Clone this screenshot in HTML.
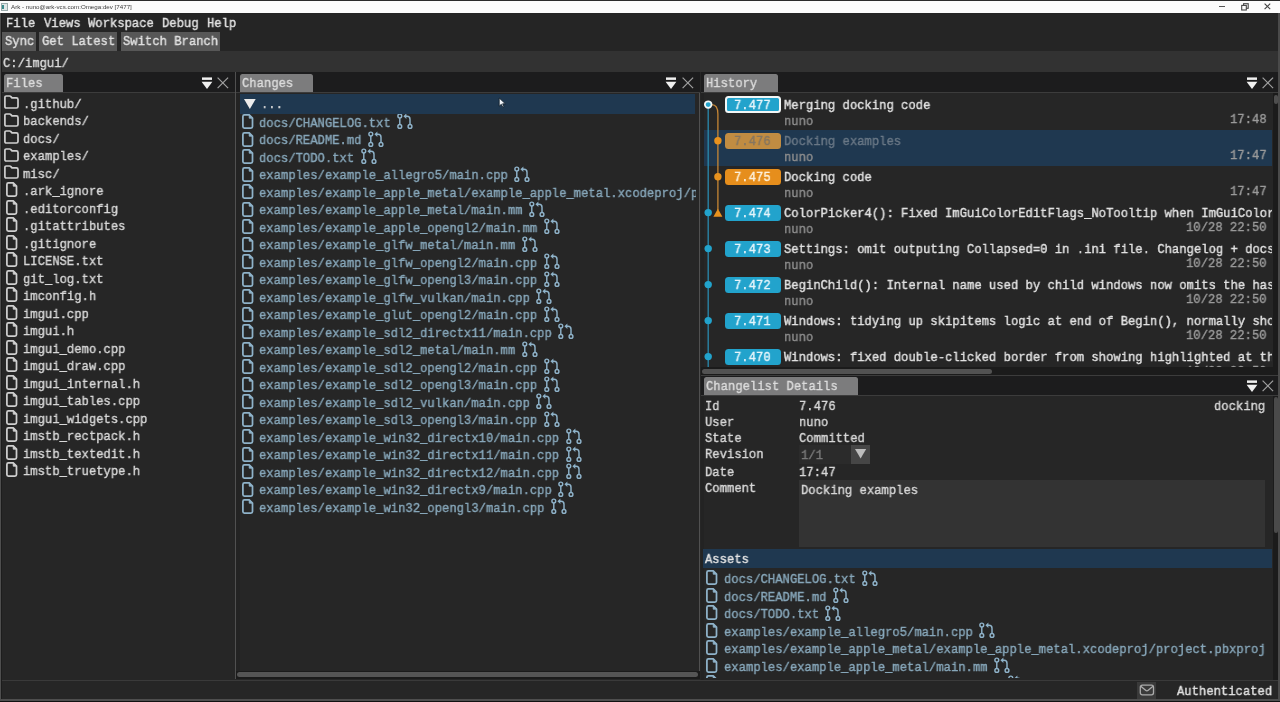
<!DOCTYPE html><html><head><meta charset="utf-8"><style>
*{margin:0;padding:0;box-sizing:border-box}
html,body{width:1280px;height:702px;overflow:hidden;background:#242424}
body{filter:blur(0.3px)}
body{position:relative;font-family:"Liberation Mono",monospace;font-size:13.5px;color:#dcdcdc}
.a{position:absolute}
.t{position:absolute;white-space:pre;line-height:14px;transform:scaleX(0.9035);transform-origin:0 0;will-change:transform;-webkit-text-stroke:0.4px currentColor}
.ic{position:absolute;overflow:visible}
.clip{position:absolute;overflow:hidden}
</style></head><body>
<div class="a" style="left:0;top:0;width:1280px;height:1px;background:#2a2a2a"></div>
<div class="a" style="left:0;top:1px;width:1280px;height:12px;background:#fbfbfb"></div>
<div class="a" style="left:1px;top:3px;width:7px;height:8px;background:#dfe6e6;border:1px solid #9aa"></div>
<div class="a" style="left:2px;top:5px;width:2px;height:4px;background:#3a8a8a"></div>
<div style="position:absolute;left:11.3px;top:2.5px;font-family:'Liberation Sans',sans-serif;font-size:6.2px;line-height:8px;color:#3a3a3a;white-space:pre;will-change:transform">Ark - nuno@ark-vcs.com:Omega:dev [7477]</div>
<div class="a" style="left:1219.3px;top:5.6px;width:5.5px;height:1.2px;background:#555"></div>
<svg class="ic" style="left:1241px;top:2.6px" width="8" height="8" viewBox="0 0 8 8"><rect x="2.6" y="0.7" width="4.6" height="4.6" fill="none" stroke="#444" stroke-width="1.1"/><rect x="0.7" y="2.4" width="4.6" height="4.6" fill="#fbfbfb" stroke="#444" stroke-width="1.1"/></svg>
<svg class="ic" style="left:1264.2px;top:2.8px" width="7" height="7" viewBox="0 0 7 7"><path d="M0.6 0.6 L6.2 6.2 M6.2 0.6 L0.6 6.2" stroke="#444" stroke-width="1.1"/></svg>
<div class="a" style="left:0;top:13px;width:1280px;height:689px;background:#1d1d1d"></div>
<div class="a" style="left:2px;top:13px;width:1276px;height:38px;background:#252525"></div>
<div class="t " style="left:6.2px;top:16.70px;color:#e2e2e2;">File</div>
<div class="t " style="left:43.7px;top:16.70px;color:#e2e2e2;">Views</div>
<div class="t " style="left:88px;top:16.70px;color:#e2e2e2;">Workspace</div>
<div class="t " style="left:162px;top:16.70px;color:#e2e2e2;">Debug</div>
<div class="t " style="left:207px;top:16.70px;color:#e2e2e2;">Help</div>
<div class="a" style="left:2.3px;top:31.5px;width:33.3px;height:19px;background:#575757"></div>
<div class="t " style="left:4.5px;top:35.30px;color:#e0e0e0;">Sync</div>
<div class="a" style="left:39.4px;top:31.5px;width:77.9px;height:19px;background:#575757"></div>
<div class="t " style="left:41.6px;top:35.30px;color:#e0e0e0;">Get Latest</div>
<div class="a" style="left:121px;top:31.5px;width:99.4px;height:19px;background:#575757"></div>
<div class="t " style="left:123.2px;top:35.30px;color:#e0e0e0;">Switch Branch</div>
<div class="a" style="left:2px;top:51px;width:1276px;height:21px;background:#323232"></div>
<div class="t " style="left:2.7px;top:56.70px;color:#dcdcdc;">C:/imgui/</div>
<div class="a" style="left:2px;top:72px;width:1276px;height:608px;background:#262626"></div>
<div class="a" style="left:236px;top:93px;width:4px;height:578px;background:#232323"></div>
<div class="a" style="left:701px;top:93px;width:3px;height:274px;background:#232323"></div>
<div class="a" style="left:701px;top:396px;width:3px;height:284px;background:#232323"></div>
<div class="a" style="left:235px;top:72px;width:1px;height:607px;background:#505050"></div>
<div class="a" style="left:699.3px;top:72px;width:1px;height:607px;background:#505050"></div>
<div class="a" style="left:2px;top:72px;width:233px;height:20px;background:#1c1c1d"></div>
<div class="a" style="left:2px;top:92px;width:233px;height:1px;background:#3c3c3c"></div>
<div class="a" style="left:3.75px;top:74px;width:59.4px;height:18px;background:#7c7c7d;border-radius:2.5px 2.5px 0 0"></div>
<div class="t " style="left:5.85px;top:77.10px;color:#dcdcdc;">Files</div>
<svg class="ic" style="left:200.8px;top:76px" width="12" height="14" viewBox="0 0 12 14"><rect x="1" y="1.1" width="10" height="3" fill="#111"/><rect x="1" y="1.4" width="10" height="2.5" fill="#f0f0f0"/><path d="M0.6 5.8 H11.4 L6 13 Z" fill="#f0f0f0"/></svg>
<svg class="ic" style="left:217px;top:77.4px" width="12" height="12" viewBox="0 0 12 12"><path d="M0.6 0.6 L11.1 11.1 M11.1 0.6 L0.6 11.1" stroke="#a0a0a0" stroke-width="1.2"/></svg>
<svg class="ic" style="left:3px;top:94.10px" width="17" height="16" viewBox="0 0 17 16"><path d="M3.3 2 H6.6 Q7.4 2 7.9 2.6 L9 3.9 H13.4 Q15 3.9 15 5.5 V12.4 Q15 14 13.4 14 H3.3 Q1.9 14 1.9 12.4 V3.6 Q1.9 2 3.3 2 Z" fill="none" stroke="#cfcfcf" stroke-width="1.7" stroke-linejoin="round"/></svg>
<div class="t " style="left:23.4px;top:97.60px;color:#d8d8d8;">.github/</div>
<svg class="ic" style="left:3px;top:111.60px" width="17" height="16" viewBox="0 0 17 16"><path d="M3.3 2 H6.6 Q7.4 2 7.9 2.6 L9 3.9 H13.4 Q15 3.9 15 5.5 V12.4 Q15 14 13.4 14 H3.3 Q1.9 14 1.9 12.4 V3.6 Q1.9 2 3.3 2 Z" fill="none" stroke="#cfcfcf" stroke-width="1.7" stroke-linejoin="round"/></svg>
<div class="t " style="left:23.4px;top:115.10px;color:#d8d8d8;">backends/</div>
<svg class="ic" style="left:3px;top:129.10px" width="17" height="16" viewBox="0 0 17 16"><path d="M3.3 2 H6.6 Q7.4 2 7.9 2.6 L9 3.9 H13.4 Q15 3.9 15 5.5 V12.4 Q15 14 13.4 14 H3.3 Q1.9 14 1.9 12.4 V3.6 Q1.9 2 3.3 2 Z" fill="none" stroke="#cfcfcf" stroke-width="1.7" stroke-linejoin="round"/></svg>
<div class="t " style="left:23.4px;top:132.60px;color:#d8d8d8;">docs/</div>
<svg class="ic" style="left:3px;top:146.60px" width="17" height="16" viewBox="0 0 17 16"><path d="M3.3 2 H6.6 Q7.4 2 7.9 2.6 L9 3.9 H13.4 Q15 3.9 15 5.5 V12.4 Q15 14 13.4 14 H3.3 Q1.9 14 1.9 12.4 V3.6 Q1.9 2 3.3 2 Z" fill="none" stroke="#cfcfcf" stroke-width="1.7" stroke-linejoin="round"/></svg>
<div class="t " style="left:23.4px;top:150.10px;color:#d8d8d8;">examples/</div>
<svg class="ic" style="left:3px;top:164.10px" width="17" height="16" viewBox="0 0 17 16"><path d="M3.3 2 H6.6 Q7.4 2 7.9 2.6 L9 3.9 H13.4 Q15 3.9 15 5.5 V12.4 Q15 14 13.4 14 H3.3 Q1.9 14 1.9 12.4 V3.6 Q1.9 2 3.3 2 Z" fill="none" stroke="#cfcfcf" stroke-width="1.7" stroke-linejoin="round"/></svg>
<div class="t " style="left:23.4px;top:167.60px;color:#d8d8d8;">misc/</div>
<svg class="ic" style="left:4.7px;top:181.30px" width="14" height="17" viewBox="0 0 14 17"><path d="M3.4 1.9 H8.2 L11.5 5.2 V13.5 Q11.5 15.1 9.9 15.1 H3.4 Q1.9 15.1 1.9 13.5 V3.5 Q1.9 1.9 3.4 1.9 Z" fill="none" stroke="#cfcfcf" stroke-width="1.75" stroke-linejoin="round"/><path d="M8.2 1.9 V5.2 H11.5 Z" fill="#cfcfcf" stroke="#cfcfcf" stroke-width="0.8" stroke-linejoin="round"/></svg>
<div class="t " style="left:23.4px;top:185.10px;color:#d8d8d8;">.ark_ignore</div>
<svg class="ic" style="left:4.7px;top:198.80px" width="14" height="17" viewBox="0 0 14 17"><path d="M3.4 1.9 H8.2 L11.5 5.2 V13.5 Q11.5 15.1 9.9 15.1 H3.4 Q1.9 15.1 1.9 13.5 V3.5 Q1.9 1.9 3.4 1.9 Z" fill="none" stroke="#cfcfcf" stroke-width="1.75" stroke-linejoin="round"/><path d="M8.2 1.9 V5.2 H11.5 Z" fill="#cfcfcf" stroke="#cfcfcf" stroke-width="0.8" stroke-linejoin="round"/></svg>
<div class="t " style="left:23.4px;top:202.60px;color:#d8d8d8;">.editorconfig</div>
<svg class="ic" style="left:4.7px;top:216.30px" width="14" height="17" viewBox="0 0 14 17"><path d="M3.4 1.9 H8.2 L11.5 5.2 V13.5 Q11.5 15.1 9.9 15.1 H3.4 Q1.9 15.1 1.9 13.5 V3.5 Q1.9 1.9 3.4 1.9 Z" fill="none" stroke="#cfcfcf" stroke-width="1.75" stroke-linejoin="round"/><path d="M8.2 1.9 V5.2 H11.5 Z" fill="#cfcfcf" stroke="#cfcfcf" stroke-width="0.8" stroke-linejoin="round"/></svg>
<div class="t " style="left:23.4px;top:220.10px;color:#d8d8d8;">.gitattributes</div>
<svg class="ic" style="left:4.7px;top:233.80px" width="14" height="17" viewBox="0 0 14 17"><path d="M3.4 1.9 H8.2 L11.5 5.2 V13.5 Q11.5 15.1 9.9 15.1 H3.4 Q1.9 15.1 1.9 13.5 V3.5 Q1.9 1.9 3.4 1.9 Z" fill="none" stroke="#cfcfcf" stroke-width="1.75" stroke-linejoin="round"/><path d="M8.2 1.9 V5.2 H11.5 Z" fill="#cfcfcf" stroke="#cfcfcf" stroke-width="0.8" stroke-linejoin="round"/></svg>
<div class="t " style="left:23.4px;top:237.60px;color:#d8d8d8;">.gitignore</div>
<svg class="ic" style="left:4.7px;top:251.30px" width="14" height="17" viewBox="0 0 14 17"><path d="M3.4 1.9 H8.2 L11.5 5.2 V13.5 Q11.5 15.1 9.9 15.1 H3.4 Q1.9 15.1 1.9 13.5 V3.5 Q1.9 1.9 3.4 1.9 Z" fill="none" stroke="#cfcfcf" stroke-width="1.75" stroke-linejoin="round"/><path d="M8.2 1.9 V5.2 H11.5 Z" fill="#cfcfcf" stroke="#cfcfcf" stroke-width="0.8" stroke-linejoin="round"/></svg>
<div class="t " style="left:23.4px;top:255.10px;color:#d8d8d8;">LICENSE.txt</div>
<svg class="ic" style="left:4.7px;top:268.80px" width="14" height="17" viewBox="0 0 14 17"><path d="M3.4 1.9 H8.2 L11.5 5.2 V13.5 Q11.5 15.1 9.9 15.1 H3.4 Q1.9 15.1 1.9 13.5 V3.5 Q1.9 1.9 3.4 1.9 Z" fill="none" stroke="#cfcfcf" stroke-width="1.75" stroke-linejoin="round"/><path d="M8.2 1.9 V5.2 H11.5 Z" fill="#cfcfcf" stroke="#cfcfcf" stroke-width="0.8" stroke-linejoin="round"/></svg>
<div class="t " style="left:23.4px;top:272.60px;color:#d8d8d8;">git_log.txt</div>
<svg class="ic" style="left:4.7px;top:286.30px" width="14" height="17" viewBox="0 0 14 17"><path d="M3.4 1.9 H8.2 L11.5 5.2 V13.5 Q11.5 15.1 9.9 15.1 H3.4 Q1.9 15.1 1.9 13.5 V3.5 Q1.9 1.9 3.4 1.9 Z" fill="none" stroke="#cfcfcf" stroke-width="1.75" stroke-linejoin="round"/><path d="M8.2 1.9 V5.2 H11.5 Z" fill="#cfcfcf" stroke="#cfcfcf" stroke-width="0.8" stroke-linejoin="round"/></svg>
<div class="t " style="left:23.4px;top:290.10px;color:#d8d8d8;">imconfig.h</div>
<svg class="ic" style="left:4.7px;top:303.80px" width="14" height="17" viewBox="0 0 14 17"><path d="M3.4 1.9 H8.2 L11.5 5.2 V13.5 Q11.5 15.1 9.9 15.1 H3.4 Q1.9 15.1 1.9 13.5 V3.5 Q1.9 1.9 3.4 1.9 Z" fill="none" stroke="#cfcfcf" stroke-width="1.75" stroke-linejoin="round"/><path d="M8.2 1.9 V5.2 H11.5 Z" fill="#cfcfcf" stroke="#cfcfcf" stroke-width="0.8" stroke-linejoin="round"/></svg>
<div class="t " style="left:23.4px;top:307.60px;color:#d8d8d8;">imgui.cpp</div>
<svg class="ic" style="left:4.7px;top:321.30px" width="14" height="17" viewBox="0 0 14 17"><path d="M3.4 1.9 H8.2 L11.5 5.2 V13.5 Q11.5 15.1 9.9 15.1 H3.4 Q1.9 15.1 1.9 13.5 V3.5 Q1.9 1.9 3.4 1.9 Z" fill="none" stroke="#cfcfcf" stroke-width="1.75" stroke-linejoin="round"/><path d="M8.2 1.9 V5.2 H11.5 Z" fill="#cfcfcf" stroke="#cfcfcf" stroke-width="0.8" stroke-linejoin="round"/></svg>
<div class="t " style="left:23.4px;top:325.10px;color:#d8d8d8;">imgui.h</div>
<svg class="ic" style="left:4.7px;top:338.80px" width="14" height="17" viewBox="0 0 14 17"><path d="M3.4 1.9 H8.2 L11.5 5.2 V13.5 Q11.5 15.1 9.9 15.1 H3.4 Q1.9 15.1 1.9 13.5 V3.5 Q1.9 1.9 3.4 1.9 Z" fill="none" stroke="#cfcfcf" stroke-width="1.75" stroke-linejoin="round"/><path d="M8.2 1.9 V5.2 H11.5 Z" fill="#cfcfcf" stroke="#cfcfcf" stroke-width="0.8" stroke-linejoin="round"/></svg>
<div class="t " style="left:23.4px;top:342.60px;color:#d8d8d8;">imgui_demo.cpp</div>
<svg class="ic" style="left:4.7px;top:356.30px" width="14" height="17" viewBox="0 0 14 17"><path d="M3.4 1.9 H8.2 L11.5 5.2 V13.5 Q11.5 15.1 9.9 15.1 H3.4 Q1.9 15.1 1.9 13.5 V3.5 Q1.9 1.9 3.4 1.9 Z" fill="none" stroke="#cfcfcf" stroke-width="1.75" stroke-linejoin="round"/><path d="M8.2 1.9 V5.2 H11.5 Z" fill="#cfcfcf" stroke="#cfcfcf" stroke-width="0.8" stroke-linejoin="round"/></svg>
<div class="t " style="left:23.4px;top:360.10px;color:#d8d8d8;">imgui_draw.cpp</div>
<svg class="ic" style="left:4.7px;top:373.80px" width="14" height="17" viewBox="0 0 14 17"><path d="M3.4 1.9 H8.2 L11.5 5.2 V13.5 Q11.5 15.1 9.9 15.1 H3.4 Q1.9 15.1 1.9 13.5 V3.5 Q1.9 1.9 3.4 1.9 Z" fill="none" stroke="#cfcfcf" stroke-width="1.75" stroke-linejoin="round"/><path d="M8.2 1.9 V5.2 H11.5 Z" fill="#cfcfcf" stroke="#cfcfcf" stroke-width="0.8" stroke-linejoin="round"/></svg>
<div class="t " style="left:23.4px;top:377.60px;color:#d8d8d8;">imgui_internal.h</div>
<svg class="ic" style="left:4.7px;top:391.30px" width="14" height="17" viewBox="0 0 14 17"><path d="M3.4 1.9 H8.2 L11.5 5.2 V13.5 Q11.5 15.1 9.9 15.1 H3.4 Q1.9 15.1 1.9 13.5 V3.5 Q1.9 1.9 3.4 1.9 Z" fill="none" stroke="#cfcfcf" stroke-width="1.75" stroke-linejoin="round"/><path d="M8.2 1.9 V5.2 H11.5 Z" fill="#cfcfcf" stroke="#cfcfcf" stroke-width="0.8" stroke-linejoin="round"/></svg>
<div class="t " style="left:23.4px;top:395.10px;color:#d8d8d8;">imgui_tables.cpp</div>
<svg class="ic" style="left:4.7px;top:408.80px" width="14" height="17" viewBox="0 0 14 17"><path d="M3.4 1.9 H8.2 L11.5 5.2 V13.5 Q11.5 15.1 9.9 15.1 H3.4 Q1.9 15.1 1.9 13.5 V3.5 Q1.9 1.9 3.4 1.9 Z" fill="none" stroke="#cfcfcf" stroke-width="1.75" stroke-linejoin="round"/><path d="M8.2 1.9 V5.2 H11.5 Z" fill="#cfcfcf" stroke="#cfcfcf" stroke-width="0.8" stroke-linejoin="round"/></svg>
<div class="t " style="left:23.4px;top:412.60px;color:#d8d8d8;">imgui_widgets.cpp</div>
<svg class="ic" style="left:4.7px;top:426.30px" width="14" height="17" viewBox="0 0 14 17"><path d="M3.4 1.9 H8.2 L11.5 5.2 V13.5 Q11.5 15.1 9.9 15.1 H3.4 Q1.9 15.1 1.9 13.5 V3.5 Q1.9 1.9 3.4 1.9 Z" fill="none" stroke="#cfcfcf" stroke-width="1.75" stroke-linejoin="round"/><path d="M8.2 1.9 V5.2 H11.5 Z" fill="#cfcfcf" stroke="#cfcfcf" stroke-width="0.8" stroke-linejoin="round"/></svg>
<div class="t " style="left:23.4px;top:430.10px;color:#d8d8d8;">imstb_rectpack.h</div>
<svg class="ic" style="left:4.7px;top:443.80px" width="14" height="17" viewBox="0 0 14 17"><path d="M3.4 1.9 H8.2 L11.5 5.2 V13.5 Q11.5 15.1 9.9 15.1 H3.4 Q1.9 15.1 1.9 13.5 V3.5 Q1.9 1.9 3.4 1.9 Z" fill="none" stroke="#cfcfcf" stroke-width="1.75" stroke-linejoin="round"/><path d="M8.2 1.9 V5.2 H11.5 Z" fill="#cfcfcf" stroke="#cfcfcf" stroke-width="0.8" stroke-linejoin="round"/></svg>
<div class="t " style="left:23.4px;top:447.60px;color:#d8d8d8;">imstb_textedit.h</div>
<svg class="ic" style="left:4.7px;top:461.30px" width="14" height="17" viewBox="0 0 14 17"><path d="M3.4 1.9 H8.2 L11.5 5.2 V13.5 Q11.5 15.1 9.9 15.1 H3.4 Q1.9 15.1 1.9 13.5 V3.5 Q1.9 1.9 3.4 1.9 Z" fill="none" stroke="#cfcfcf" stroke-width="1.75" stroke-linejoin="round"/><path d="M8.2 1.9 V5.2 H11.5 Z" fill="#cfcfcf" stroke="#cfcfcf" stroke-width="0.8" stroke-linejoin="round"/></svg>
<div class="t " style="left:23.4px;top:465.10px;color:#d8d8d8;">imstb_truetype.h</div>
<div class="a" style="left:236px;top:72px;width:464px;height:20px;background:#1c1c1d"></div>
<div class="a" style="left:236px;top:92px;width:464px;height:1px;background:#3c3c3c"></div>
<div class="a" style="left:240px;top:74px;width:73.2px;height:18px;background:#7c7c7d;border-radius:2.5px 2.5px 0 0"></div>
<div class="t " style="left:242.1px;top:77.10px;color:#dcdcdc;">Changes</div>
<svg class="ic" style="left:665px;top:76px" width="12" height="14" viewBox="0 0 12 14"><rect x="1" y="1.1" width="10" height="3" fill="#111"/><rect x="1" y="1.4" width="10" height="2.5" fill="#f0f0f0"/><path d="M0.6 5.8 H11.4 L6 13 Z" fill="#f0f0f0"/></svg>
<svg class="ic" style="left:681.7px;top:77.4px" width="12" height="12" viewBox="0 0 12 12"><path d="M0.6 0.6 L11.1 11.1 M11.1 0.6 L0.6 11.1" stroke="#a0a0a0" stroke-width="1.2"/></svg>
<div class="a" style="left:240px;top:93.7px;width:455px;height:19.9px;background:#1f3850"></div>
<svg class="ic" style="left:244.3px;top:98.8px" width="12" height="10" viewBox="0 0 12 10"><path d="M0 0 H11.7 L5.85 10 Z" fill="#ececec"/></svg>
<div class="t " style="left:260.8px;top:98.20px;color:#d8d8d8;">...</div>
<div class="clip" style="left:236px;top:113.6px;width:460px;height:557px">
<svg class="ic" style="left:4.699999999999989px;top:-0.50px" width="14" height="17" viewBox="0 0 14 17"><path d="M3.4 1.9 H8.2 L11.5 5.2 V13.5 Q11.5 15.1 9.9 15.1 H3.4 Q1.9 15.1 1.9 13.5 V3.5 Q1.9 1.9 3.4 1.9 Z" fill="none" stroke="#8fb3ca" stroke-width="1.75" stroke-linejoin="round"/><path d="M8.2 1.9 V5.2 H11.5 Z" fill="#8fb3ca" stroke="#8fb3ca" stroke-width="0.8" stroke-linejoin="round"/></svg>
<div class="t " style="left:23.30000000000001px;top:3.30px;color:#87a7ba;">docs/CHANGELOG.txt</div>
<svg class="ic" style="left:161.324px;top:-0.20px" width="15" height="16" viewBox="0 0 15 16"><g fill="none" stroke="#8fb3ca" stroke-width="1.45"><circle cx="2.8" cy="3" r="1.9"/><circle cx="2.8" cy="13.4" r="1.9"/><line x1="2.8" y1="4.9" x2="2.8" y2="11.5"/><circle cx="13" cy="13.4" r="1.9"/><path d="M13 11.5 V6.2 Q13 3.2 10 3.2 H8.4"/></g><path d="M6.4 3.2 L9.4 0.4 V6 Z" fill="#8fb3ca"/></svg>
<svg class="ic" style="left:4.699999999999989px;top:17.00px" width="14" height="17" viewBox="0 0 14 17"><path d="M3.4 1.9 H8.2 L11.5 5.2 V13.5 Q11.5 15.1 9.9 15.1 H3.4 Q1.9 15.1 1.9 13.5 V3.5 Q1.9 1.9 3.4 1.9 Z" fill="none" stroke="#8fb3ca" stroke-width="1.75" stroke-linejoin="round"/><path d="M8.2 1.9 V5.2 H11.5 Z" fill="#8fb3ca" stroke="#8fb3ca" stroke-width="0.8" stroke-linejoin="round"/></svg>
<div class="t " style="left:23.30000000000001px;top:20.80px;color:#87a7ba;">docs/README.md</div>
<svg class="ic" style="left:132.05200000000002px;top:17.30px" width="15" height="16" viewBox="0 0 15 16"><g fill="none" stroke="#8fb3ca" stroke-width="1.45"><circle cx="2.8" cy="3" r="1.9"/><circle cx="2.8" cy="13.4" r="1.9"/><line x1="2.8" y1="4.9" x2="2.8" y2="11.5"/><circle cx="13" cy="13.4" r="1.9"/><path d="M13 11.5 V6.2 Q13 3.2 10 3.2 H8.4"/></g><path d="M6.4 3.2 L9.4 0.4 V6 Z" fill="#8fb3ca"/></svg>
<svg class="ic" style="left:4.699999999999989px;top:34.50px" width="14" height="17" viewBox="0 0 14 17"><path d="M3.4 1.9 H8.2 L11.5 5.2 V13.5 Q11.5 15.1 9.9 15.1 H3.4 Q1.9 15.1 1.9 13.5 V3.5 Q1.9 1.9 3.4 1.9 Z" fill="none" stroke="#8fb3ca" stroke-width="1.75" stroke-linejoin="round"/><path d="M8.2 1.9 V5.2 H11.5 Z" fill="#8fb3ca" stroke="#8fb3ca" stroke-width="0.8" stroke-linejoin="round"/></svg>
<div class="t " style="left:23.30000000000001px;top:38.30px;color:#87a7ba;">docs/TODO.txt</div>
<svg class="ic" style="left:124.73400000000001px;top:34.80px" width="15" height="16" viewBox="0 0 15 16"><g fill="none" stroke="#8fb3ca" stroke-width="1.45"><circle cx="2.8" cy="3" r="1.9"/><circle cx="2.8" cy="13.4" r="1.9"/><line x1="2.8" y1="4.9" x2="2.8" y2="11.5"/><circle cx="13" cy="13.4" r="1.9"/><path d="M13 11.5 V6.2 Q13 3.2 10 3.2 H8.4"/></g><path d="M6.4 3.2 L9.4 0.4 V6 Z" fill="#8fb3ca"/></svg>
<svg class="ic" style="left:4.699999999999989px;top:52.00px" width="14" height="17" viewBox="0 0 14 17"><path d="M3.4 1.9 H8.2 L11.5 5.2 V13.5 Q11.5 15.1 9.9 15.1 H3.4 Q1.9 15.1 1.9 13.5 V3.5 Q1.9 1.9 3.4 1.9 Z" fill="none" stroke="#8fb3ca" stroke-width="1.75" stroke-linejoin="round"/><path d="M8.2 1.9 V5.2 H11.5 Z" fill="#8fb3ca" stroke="#8fb3ca" stroke-width="0.8" stroke-linejoin="round"/></svg>
<div class="t " style="left:23.30000000000001px;top:55.80px;color:#87a7ba;">examples/example_allegro5/main.cpp</div>
<svg class="ic" style="left:278.412px;top:52.30px" width="15" height="16" viewBox="0 0 15 16"><g fill="none" stroke="#8fb3ca" stroke-width="1.45"><circle cx="2.8" cy="3" r="1.9"/><circle cx="2.8" cy="13.4" r="1.9"/><line x1="2.8" y1="4.9" x2="2.8" y2="11.5"/><circle cx="13" cy="13.4" r="1.9"/><path d="M13 11.5 V6.2 Q13 3.2 10 3.2 H8.4"/></g><path d="M6.4 3.2 L9.4 0.4 V6 Z" fill="#8fb3ca"/></svg>
<svg class="ic" style="left:4.699999999999989px;top:69.50px" width="14" height="17" viewBox="0 0 14 17"><path d="M3.4 1.9 H8.2 L11.5 5.2 V13.5 Q11.5 15.1 9.9 15.1 H3.4 Q1.9 15.1 1.9 13.5 V3.5 Q1.9 1.9 3.4 1.9 Z" fill="none" stroke="#8fb3ca" stroke-width="1.75" stroke-linejoin="round"/><path d="M8.2 1.9 V5.2 H11.5 Z" fill="#8fb3ca" stroke="#8fb3ca" stroke-width="0.8" stroke-linejoin="round"/></svg>
<div class="t " style="left:23.30000000000001px;top:73.30px;color:#87a7ba;">examples/example_apple_metal/example_apple_metal.xcodeproj/project.pbxproj</div>
<svg class="ic" style="left:4.699999999999989px;top:87.00px" width="14" height="17" viewBox="0 0 14 17"><path d="M3.4 1.9 H8.2 L11.5 5.2 V13.5 Q11.5 15.1 9.9 15.1 H3.4 Q1.9 15.1 1.9 13.5 V3.5 Q1.9 1.9 3.4 1.9 Z" fill="none" stroke="#8fb3ca" stroke-width="1.75" stroke-linejoin="round"/><path d="M8.2 1.9 V5.2 H11.5 Z" fill="#8fb3ca" stroke="#8fb3ca" stroke-width="0.8" stroke-linejoin="round"/></svg>
<div class="t " style="left:23.30000000000001px;top:90.80px;color:#87a7ba;">examples/example_apple_metal/main.mm</div>
<svg class="ic" style="left:293.048px;top:87.30px" width="15" height="16" viewBox="0 0 15 16"><g fill="none" stroke="#8fb3ca" stroke-width="1.45"><circle cx="2.8" cy="3" r="1.9"/><circle cx="2.8" cy="13.4" r="1.9"/><line x1="2.8" y1="4.9" x2="2.8" y2="11.5"/><circle cx="13" cy="13.4" r="1.9"/><path d="M13 11.5 V6.2 Q13 3.2 10 3.2 H8.4"/></g><path d="M6.4 3.2 L9.4 0.4 V6 Z" fill="#8fb3ca"/></svg>
<svg class="ic" style="left:4.699999999999989px;top:104.50px" width="14" height="17" viewBox="0 0 14 17"><path d="M3.4 1.9 H8.2 L11.5 5.2 V13.5 Q11.5 15.1 9.9 15.1 H3.4 Q1.9 15.1 1.9 13.5 V3.5 Q1.9 1.9 3.4 1.9 Z" fill="none" stroke="#8fb3ca" stroke-width="1.75" stroke-linejoin="round"/><path d="M8.2 1.9 V5.2 H11.5 Z" fill="#8fb3ca" stroke="#8fb3ca" stroke-width="0.8" stroke-linejoin="round"/></svg>
<div class="t " style="left:23.30000000000001px;top:108.30px;color:#87a7ba;">examples/example_apple_opengl2/main.mm</div>
<svg class="ic" style="left:307.684px;top:104.80px" width="15" height="16" viewBox="0 0 15 16"><g fill="none" stroke="#8fb3ca" stroke-width="1.45"><circle cx="2.8" cy="3" r="1.9"/><circle cx="2.8" cy="13.4" r="1.9"/><line x1="2.8" y1="4.9" x2="2.8" y2="11.5"/><circle cx="13" cy="13.4" r="1.9"/><path d="M13 11.5 V6.2 Q13 3.2 10 3.2 H8.4"/></g><path d="M6.4 3.2 L9.4 0.4 V6 Z" fill="#8fb3ca"/></svg>
<svg class="ic" style="left:4.699999999999989px;top:122.00px" width="14" height="17" viewBox="0 0 14 17"><path d="M3.4 1.9 H8.2 L11.5 5.2 V13.5 Q11.5 15.1 9.9 15.1 H3.4 Q1.9 15.1 1.9 13.5 V3.5 Q1.9 1.9 3.4 1.9 Z" fill="none" stroke="#8fb3ca" stroke-width="1.75" stroke-linejoin="round"/><path d="M8.2 1.9 V5.2 H11.5 Z" fill="#8fb3ca" stroke="#8fb3ca" stroke-width="0.8" stroke-linejoin="round"/></svg>
<div class="t " style="left:23.30000000000001px;top:125.80px;color:#87a7ba;">examples/example_glfw_metal/main.mm</div>
<svg class="ic" style="left:285.73px;top:122.30px" width="15" height="16" viewBox="0 0 15 16"><g fill="none" stroke="#8fb3ca" stroke-width="1.45"><circle cx="2.8" cy="3" r="1.9"/><circle cx="2.8" cy="13.4" r="1.9"/><line x1="2.8" y1="4.9" x2="2.8" y2="11.5"/><circle cx="13" cy="13.4" r="1.9"/><path d="M13 11.5 V6.2 Q13 3.2 10 3.2 H8.4"/></g><path d="M6.4 3.2 L9.4 0.4 V6 Z" fill="#8fb3ca"/></svg>
<svg class="ic" style="left:4.699999999999989px;top:139.50px" width="14" height="17" viewBox="0 0 14 17"><path d="M3.4 1.9 H8.2 L11.5 5.2 V13.5 Q11.5 15.1 9.9 15.1 H3.4 Q1.9 15.1 1.9 13.5 V3.5 Q1.9 1.9 3.4 1.9 Z" fill="none" stroke="#8fb3ca" stroke-width="1.75" stroke-linejoin="round"/><path d="M8.2 1.9 V5.2 H11.5 Z" fill="#8fb3ca" stroke="#8fb3ca" stroke-width="0.8" stroke-linejoin="round"/></svg>
<div class="t " style="left:23.30000000000001px;top:143.30px;color:#87a7ba;">examples/example_glfw_opengl2/main.cpp</div>
<svg class="ic" style="left:307.684px;top:139.80px" width="15" height="16" viewBox="0 0 15 16"><g fill="none" stroke="#8fb3ca" stroke-width="1.45"><circle cx="2.8" cy="3" r="1.9"/><circle cx="2.8" cy="13.4" r="1.9"/><line x1="2.8" y1="4.9" x2="2.8" y2="11.5"/><circle cx="13" cy="13.4" r="1.9"/><path d="M13 11.5 V6.2 Q13 3.2 10 3.2 H8.4"/></g><path d="M6.4 3.2 L9.4 0.4 V6 Z" fill="#8fb3ca"/></svg>
<svg class="ic" style="left:4.699999999999989px;top:157.00px" width="14" height="17" viewBox="0 0 14 17"><path d="M3.4 1.9 H8.2 L11.5 5.2 V13.5 Q11.5 15.1 9.9 15.1 H3.4 Q1.9 15.1 1.9 13.5 V3.5 Q1.9 1.9 3.4 1.9 Z" fill="none" stroke="#8fb3ca" stroke-width="1.75" stroke-linejoin="round"/><path d="M8.2 1.9 V5.2 H11.5 Z" fill="#8fb3ca" stroke="#8fb3ca" stroke-width="0.8" stroke-linejoin="round"/></svg>
<div class="t " style="left:23.30000000000001px;top:160.80px;color:#87a7ba;">examples/example_glfw_opengl3/main.cpp</div>
<svg class="ic" style="left:307.684px;top:157.30px" width="15" height="16" viewBox="0 0 15 16"><g fill="none" stroke="#8fb3ca" stroke-width="1.45"><circle cx="2.8" cy="3" r="1.9"/><circle cx="2.8" cy="13.4" r="1.9"/><line x1="2.8" y1="4.9" x2="2.8" y2="11.5"/><circle cx="13" cy="13.4" r="1.9"/><path d="M13 11.5 V6.2 Q13 3.2 10 3.2 H8.4"/></g><path d="M6.4 3.2 L9.4 0.4 V6 Z" fill="#8fb3ca"/></svg>
<svg class="ic" style="left:4.699999999999989px;top:174.50px" width="14" height="17" viewBox="0 0 14 17"><path d="M3.4 1.9 H8.2 L11.5 5.2 V13.5 Q11.5 15.1 9.9 15.1 H3.4 Q1.9 15.1 1.9 13.5 V3.5 Q1.9 1.9 3.4 1.9 Z" fill="none" stroke="#8fb3ca" stroke-width="1.75" stroke-linejoin="round"/><path d="M8.2 1.9 V5.2 H11.5 Z" fill="#8fb3ca" stroke="#8fb3ca" stroke-width="0.8" stroke-linejoin="round"/></svg>
<div class="t " style="left:23.30000000000001px;top:178.30px;color:#87a7ba;">examples/example_glfw_vulkan/main.cpp</div>
<svg class="ic" style="left:300.366px;top:174.80px" width="15" height="16" viewBox="0 0 15 16"><g fill="none" stroke="#8fb3ca" stroke-width="1.45"><circle cx="2.8" cy="3" r="1.9"/><circle cx="2.8" cy="13.4" r="1.9"/><line x1="2.8" y1="4.9" x2="2.8" y2="11.5"/><circle cx="13" cy="13.4" r="1.9"/><path d="M13 11.5 V6.2 Q13 3.2 10 3.2 H8.4"/></g><path d="M6.4 3.2 L9.4 0.4 V6 Z" fill="#8fb3ca"/></svg>
<svg class="ic" style="left:4.699999999999989px;top:192.00px" width="14" height="17" viewBox="0 0 14 17"><path d="M3.4 1.9 H8.2 L11.5 5.2 V13.5 Q11.5 15.1 9.9 15.1 H3.4 Q1.9 15.1 1.9 13.5 V3.5 Q1.9 1.9 3.4 1.9 Z" fill="none" stroke="#8fb3ca" stroke-width="1.75" stroke-linejoin="round"/><path d="M8.2 1.9 V5.2 H11.5 Z" fill="#8fb3ca" stroke="#8fb3ca" stroke-width="0.8" stroke-linejoin="round"/></svg>
<div class="t " style="left:23.30000000000001px;top:195.80px;color:#87a7ba;">examples/example_glut_opengl2/main.cpp</div>
<svg class="ic" style="left:307.684px;top:192.30px" width="15" height="16" viewBox="0 0 15 16"><g fill="none" stroke="#8fb3ca" stroke-width="1.45"><circle cx="2.8" cy="3" r="1.9"/><circle cx="2.8" cy="13.4" r="1.9"/><line x1="2.8" y1="4.9" x2="2.8" y2="11.5"/><circle cx="13" cy="13.4" r="1.9"/><path d="M13 11.5 V6.2 Q13 3.2 10 3.2 H8.4"/></g><path d="M6.4 3.2 L9.4 0.4 V6 Z" fill="#8fb3ca"/></svg>
<svg class="ic" style="left:4.699999999999989px;top:209.50px" width="14" height="17" viewBox="0 0 14 17"><path d="M3.4 1.9 H8.2 L11.5 5.2 V13.5 Q11.5 15.1 9.9 15.1 H3.4 Q1.9 15.1 1.9 13.5 V3.5 Q1.9 1.9 3.4 1.9 Z" fill="none" stroke="#8fb3ca" stroke-width="1.75" stroke-linejoin="round"/><path d="M8.2 1.9 V5.2 H11.5 Z" fill="#8fb3ca" stroke="#8fb3ca" stroke-width="0.8" stroke-linejoin="round"/></svg>
<div class="t " style="left:23.30000000000001px;top:213.30px;color:#87a7ba;">examples/example_sdl2_directx11/main.cpp</div>
<svg class="ic" style="left:322.32px;top:209.80px" width="15" height="16" viewBox="0 0 15 16"><g fill="none" stroke="#8fb3ca" stroke-width="1.45"><circle cx="2.8" cy="3" r="1.9"/><circle cx="2.8" cy="13.4" r="1.9"/><line x1="2.8" y1="4.9" x2="2.8" y2="11.5"/><circle cx="13" cy="13.4" r="1.9"/><path d="M13 11.5 V6.2 Q13 3.2 10 3.2 H8.4"/></g><path d="M6.4 3.2 L9.4 0.4 V6 Z" fill="#8fb3ca"/></svg>
<svg class="ic" style="left:4.699999999999989px;top:227.00px" width="14" height="17" viewBox="0 0 14 17"><path d="M3.4 1.9 H8.2 L11.5 5.2 V13.5 Q11.5 15.1 9.9 15.1 H3.4 Q1.9 15.1 1.9 13.5 V3.5 Q1.9 1.9 3.4 1.9 Z" fill="none" stroke="#8fb3ca" stroke-width="1.75" stroke-linejoin="round"/><path d="M8.2 1.9 V5.2 H11.5 Z" fill="#8fb3ca" stroke="#8fb3ca" stroke-width="0.8" stroke-linejoin="round"/></svg>
<div class="t " style="left:23.30000000000001px;top:230.80px;color:#87a7ba;">examples/example_sdl2_metal/main.mm</div>
<svg class="ic" style="left:285.73px;top:227.30px" width="15" height="16" viewBox="0 0 15 16"><g fill="none" stroke="#8fb3ca" stroke-width="1.45"><circle cx="2.8" cy="3" r="1.9"/><circle cx="2.8" cy="13.4" r="1.9"/><line x1="2.8" y1="4.9" x2="2.8" y2="11.5"/><circle cx="13" cy="13.4" r="1.9"/><path d="M13 11.5 V6.2 Q13 3.2 10 3.2 H8.4"/></g><path d="M6.4 3.2 L9.4 0.4 V6 Z" fill="#8fb3ca"/></svg>
<svg class="ic" style="left:4.699999999999989px;top:244.50px" width="14" height="17" viewBox="0 0 14 17"><path d="M3.4 1.9 H8.2 L11.5 5.2 V13.5 Q11.5 15.1 9.9 15.1 H3.4 Q1.9 15.1 1.9 13.5 V3.5 Q1.9 1.9 3.4 1.9 Z" fill="none" stroke="#8fb3ca" stroke-width="1.75" stroke-linejoin="round"/><path d="M8.2 1.9 V5.2 H11.5 Z" fill="#8fb3ca" stroke="#8fb3ca" stroke-width="0.8" stroke-linejoin="round"/></svg>
<div class="t " style="left:23.30000000000001px;top:248.30px;color:#87a7ba;">examples/example_sdl2_opengl2/main.cpp</div>
<svg class="ic" style="left:307.684px;top:244.80px" width="15" height="16" viewBox="0 0 15 16"><g fill="none" stroke="#8fb3ca" stroke-width="1.45"><circle cx="2.8" cy="3" r="1.9"/><circle cx="2.8" cy="13.4" r="1.9"/><line x1="2.8" y1="4.9" x2="2.8" y2="11.5"/><circle cx="13" cy="13.4" r="1.9"/><path d="M13 11.5 V6.2 Q13 3.2 10 3.2 H8.4"/></g><path d="M6.4 3.2 L9.4 0.4 V6 Z" fill="#8fb3ca"/></svg>
<svg class="ic" style="left:4.699999999999989px;top:262.00px" width="14" height="17" viewBox="0 0 14 17"><path d="M3.4 1.9 H8.2 L11.5 5.2 V13.5 Q11.5 15.1 9.9 15.1 H3.4 Q1.9 15.1 1.9 13.5 V3.5 Q1.9 1.9 3.4 1.9 Z" fill="none" stroke="#8fb3ca" stroke-width="1.75" stroke-linejoin="round"/><path d="M8.2 1.9 V5.2 H11.5 Z" fill="#8fb3ca" stroke="#8fb3ca" stroke-width="0.8" stroke-linejoin="round"/></svg>
<div class="t " style="left:23.30000000000001px;top:265.80px;color:#87a7ba;">examples/example_sdl2_opengl3/main.cpp</div>
<svg class="ic" style="left:307.684px;top:262.30px" width="15" height="16" viewBox="0 0 15 16"><g fill="none" stroke="#8fb3ca" stroke-width="1.45"><circle cx="2.8" cy="3" r="1.9"/><circle cx="2.8" cy="13.4" r="1.9"/><line x1="2.8" y1="4.9" x2="2.8" y2="11.5"/><circle cx="13" cy="13.4" r="1.9"/><path d="M13 11.5 V6.2 Q13 3.2 10 3.2 H8.4"/></g><path d="M6.4 3.2 L9.4 0.4 V6 Z" fill="#8fb3ca"/></svg>
<svg class="ic" style="left:4.699999999999989px;top:279.50px" width="14" height="17" viewBox="0 0 14 17"><path d="M3.4 1.9 H8.2 L11.5 5.2 V13.5 Q11.5 15.1 9.9 15.1 H3.4 Q1.9 15.1 1.9 13.5 V3.5 Q1.9 1.9 3.4 1.9 Z" fill="none" stroke="#8fb3ca" stroke-width="1.75" stroke-linejoin="round"/><path d="M8.2 1.9 V5.2 H11.5 Z" fill="#8fb3ca" stroke="#8fb3ca" stroke-width="0.8" stroke-linejoin="round"/></svg>
<div class="t " style="left:23.30000000000001px;top:283.30px;color:#87a7ba;">examples/example_sdl2_vulkan/main.cpp</div>
<svg class="ic" style="left:300.366px;top:279.80px" width="15" height="16" viewBox="0 0 15 16"><g fill="none" stroke="#8fb3ca" stroke-width="1.45"><circle cx="2.8" cy="3" r="1.9"/><circle cx="2.8" cy="13.4" r="1.9"/><line x1="2.8" y1="4.9" x2="2.8" y2="11.5"/><circle cx="13" cy="13.4" r="1.9"/><path d="M13 11.5 V6.2 Q13 3.2 10 3.2 H8.4"/></g><path d="M6.4 3.2 L9.4 0.4 V6 Z" fill="#8fb3ca"/></svg>
<svg class="ic" style="left:4.699999999999989px;top:297.00px" width="14" height="17" viewBox="0 0 14 17"><path d="M3.4 1.9 H8.2 L11.5 5.2 V13.5 Q11.5 15.1 9.9 15.1 H3.4 Q1.9 15.1 1.9 13.5 V3.5 Q1.9 1.9 3.4 1.9 Z" fill="none" stroke="#8fb3ca" stroke-width="1.75" stroke-linejoin="round"/><path d="M8.2 1.9 V5.2 H11.5 Z" fill="#8fb3ca" stroke="#8fb3ca" stroke-width="0.8" stroke-linejoin="round"/></svg>
<div class="t " style="left:23.30000000000001px;top:300.80px;color:#87a7ba;">examples/example_sdl3_opengl3/main.cpp</div>
<svg class="ic" style="left:307.684px;top:297.30px" width="15" height="16" viewBox="0 0 15 16"><g fill="none" stroke="#8fb3ca" stroke-width="1.45"><circle cx="2.8" cy="3" r="1.9"/><circle cx="2.8" cy="13.4" r="1.9"/><line x1="2.8" y1="4.9" x2="2.8" y2="11.5"/><circle cx="13" cy="13.4" r="1.9"/><path d="M13 11.5 V6.2 Q13 3.2 10 3.2 H8.4"/></g><path d="M6.4 3.2 L9.4 0.4 V6 Z" fill="#8fb3ca"/></svg>
<svg class="ic" style="left:4.699999999999989px;top:314.50px" width="14" height="17" viewBox="0 0 14 17"><path d="M3.4 1.9 H8.2 L11.5 5.2 V13.5 Q11.5 15.1 9.9 15.1 H3.4 Q1.9 15.1 1.9 13.5 V3.5 Q1.9 1.9 3.4 1.9 Z" fill="none" stroke="#8fb3ca" stroke-width="1.75" stroke-linejoin="round"/><path d="M8.2 1.9 V5.2 H11.5 Z" fill="#8fb3ca" stroke="#8fb3ca" stroke-width="0.8" stroke-linejoin="round"/></svg>
<div class="t " style="left:23.30000000000001px;top:318.30px;color:#87a7ba;">examples/example_win32_directx10/main.cpp</div>
<svg class="ic" style="left:329.63800000000003px;top:314.80px" width="15" height="16" viewBox="0 0 15 16"><g fill="none" stroke="#8fb3ca" stroke-width="1.45"><circle cx="2.8" cy="3" r="1.9"/><circle cx="2.8" cy="13.4" r="1.9"/><line x1="2.8" y1="4.9" x2="2.8" y2="11.5"/><circle cx="13" cy="13.4" r="1.9"/><path d="M13 11.5 V6.2 Q13 3.2 10 3.2 H8.4"/></g><path d="M6.4 3.2 L9.4 0.4 V6 Z" fill="#8fb3ca"/></svg>
<svg class="ic" style="left:4.699999999999989px;top:332.00px" width="14" height="17" viewBox="0 0 14 17"><path d="M3.4 1.9 H8.2 L11.5 5.2 V13.5 Q11.5 15.1 9.9 15.1 H3.4 Q1.9 15.1 1.9 13.5 V3.5 Q1.9 1.9 3.4 1.9 Z" fill="none" stroke="#8fb3ca" stroke-width="1.75" stroke-linejoin="round"/><path d="M8.2 1.9 V5.2 H11.5 Z" fill="#8fb3ca" stroke="#8fb3ca" stroke-width="0.8" stroke-linejoin="round"/></svg>
<div class="t " style="left:23.30000000000001px;top:335.80px;color:#87a7ba;">examples/example_win32_directx11/main.cpp</div>
<svg class="ic" style="left:329.63800000000003px;top:332.30px" width="15" height="16" viewBox="0 0 15 16"><g fill="none" stroke="#8fb3ca" stroke-width="1.45"><circle cx="2.8" cy="3" r="1.9"/><circle cx="2.8" cy="13.4" r="1.9"/><line x1="2.8" y1="4.9" x2="2.8" y2="11.5"/><circle cx="13" cy="13.4" r="1.9"/><path d="M13 11.5 V6.2 Q13 3.2 10 3.2 H8.4"/></g><path d="M6.4 3.2 L9.4 0.4 V6 Z" fill="#8fb3ca"/></svg>
<svg class="ic" style="left:4.699999999999989px;top:349.50px" width="14" height="17" viewBox="0 0 14 17"><path d="M3.4 1.9 H8.2 L11.5 5.2 V13.5 Q11.5 15.1 9.9 15.1 H3.4 Q1.9 15.1 1.9 13.5 V3.5 Q1.9 1.9 3.4 1.9 Z" fill="none" stroke="#8fb3ca" stroke-width="1.75" stroke-linejoin="round"/><path d="M8.2 1.9 V5.2 H11.5 Z" fill="#8fb3ca" stroke="#8fb3ca" stroke-width="0.8" stroke-linejoin="round"/></svg>
<div class="t " style="left:23.30000000000001px;top:353.30px;color:#87a7ba;">examples/example_win32_directx12/main.cpp</div>
<svg class="ic" style="left:329.63800000000003px;top:349.80px" width="15" height="16" viewBox="0 0 15 16"><g fill="none" stroke="#8fb3ca" stroke-width="1.45"><circle cx="2.8" cy="3" r="1.9"/><circle cx="2.8" cy="13.4" r="1.9"/><line x1="2.8" y1="4.9" x2="2.8" y2="11.5"/><circle cx="13" cy="13.4" r="1.9"/><path d="M13 11.5 V6.2 Q13 3.2 10 3.2 H8.4"/></g><path d="M6.4 3.2 L9.4 0.4 V6 Z" fill="#8fb3ca"/></svg>
<svg class="ic" style="left:4.699999999999989px;top:367.00px" width="14" height="17" viewBox="0 0 14 17"><path d="M3.4 1.9 H8.2 L11.5 5.2 V13.5 Q11.5 15.1 9.9 15.1 H3.4 Q1.9 15.1 1.9 13.5 V3.5 Q1.9 1.9 3.4 1.9 Z" fill="none" stroke="#8fb3ca" stroke-width="1.75" stroke-linejoin="round"/><path d="M8.2 1.9 V5.2 H11.5 Z" fill="#8fb3ca" stroke="#8fb3ca" stroke-width="0.8" stroke-linejoin="round"/></svg>
<div class="t " style="left:23.30000000000001px;top:370.80px;color:#87a7ba;">examples/example_win32_directx9/main.cpp</div>
<svg class="ic" style="left:322.32px;top:367.30px" width="15" height="16" viewBox="0 0 15 16"><g fill="none" stroke="#8fb3ca" stroke-width="1.45"><circle cx="2.8" cy="3" r="1.9"/><circle cx="2.8" cy="13.4" r="1.9"/><line x1="2.8" y1="4.9" x2="2.8" y2="11.5"/><circle cx="13" cy="13.4" r="1.9"/><path d="M13 11.5 V6.2 Q13 3.2 10 3.2 H8.4"/></g><path d="M6.4 3.2 L9.4 0.4 V6 Z" fill="#8fb3ca"/></svg>
<svg class="ic" style="left:4.699999999999989px;top:384.50px" width="14" height="17" viewBox="0 0 14 17"><path d="M3.4 1.9 H8.2 L11.5 5.2 V13.5 Q11.5 15.1 9.9 15.1 H3.4 Q1.9 15.1 1.9 13.5 V3.5 Q1.9 1.9 3.4 1.9 Z" fill="none" stroke="#8fb3ca" stroke-width="1.75" stroke-linejoin="round"/><path d="M8.2 1.9 V5.2 H11.5 Z" fill="#8fb3ca" stroke="#8fb3ca" stroke-width="0.8" stroke-linejoin="round"/></svg>
<div class="t " style="left:23.30000000000001px;top:388.30px;color:#87a7ba;">examples/example_win32_opengl3/main.cpp</div>
<svg class="ic" style="left:315.002px;top:384.80px" width="15" height="16" viewBox="0 0 15 16"><g fill="none" stroke="#8fb3ca" stroke-width="1.45"><circle cx="2.8" cy="3" r="1.9"/><circle cx="2.8" cy="13.4" r="1.9"/><line x1="2.8" y1="4.9" x2="2.8" y2="11.5"/><circle cx="13" cy="13.4" r="1.9"/><path d="M13 11.5 V6.2 Q13 3.2 10 3.2 H8.4"/></g><path d="M6.4 3.2 L9.4 0.4 V6 Z" fill="#8fb3ca"/></svg>
</div>
<div class="a" style="left:236px;top:671px;width:464px;height:8px;background:#1b1b1b"></div>
<div class="a" style="left:237.4px;top:672.2px;width:460.6px;height:4.8px;background:#555;border-radius:2.5px"></div>
<svg class="ic" style="left:497.9px;top:96.9px" width="9" height="11" viewBox="0 0 9 11"><path d="M1.2 1 V9.2 L3.3 7.3 L4.8 10.2 L6 9.6 L4.6 6.8 H7.4 Z" fill="#f2f6fa" stroke="#0d1a26" stroke-width="0.8" stroke-linejoin="round"/></svg>
<div class="a" style="left:701px;top:72px;width:577px;height:20px;background:#1c1c1d"></div>
<div class="a" style="left:701px;top:92px;width:577px;height:1px;background:#3c3c3c"></div>
<div class="a" style="left:704px;top:74px;width:74.1px;height:18px;background:#7c7c7d;border-radius:2.5px 2.5px 0 0"></div>
<div class="t " style="left:706.1px;top:77.10px;color:#dcdcdc;">History</div>
<svg class="ic" style="left:1245.7px;top:76px" width="12" height="14" viewBox="0 0 12 14"><rect x="1" y="1.1" width="10" height="3" fill="#111"/><rect x="1" y="1.4" width="10" height="2.5" fill="#f0f0f0"/><path d="M0.6 5.8 H11.4 L6 13 Z" fill="#f0f0f0"/></svg>
<svg class="ic" style="left:1262px;top:77.4px" width="12" height="12" viewBox="0 0 12 12"><path d="M0.6 0.6 L11.1 11.1 M11.1 0.6 L0.6 11.1" stroke="#a0a0a0" stroke-width="1.2"/></svg>
<div class="clip" style="left:701px;top:93px;width:571px;height:274.8px">
<div class="a" style="left:3px;top:37px;width:568px;height:36.2px;background:#1f3850"></div>
<svg class="ic" style="left:0;top:0" width="40" height="274"><path d="M7.2000000000000455 15 V274" stroke="#2a86aa" stroke-width="1.35"/><path d="M10.700000000000045 11.599999999999994 Q16.899999999999977 11.599999999999994 16.899999999999977 21 V117" fill="none" stroke="#c68634" stroke-width="1.3"/><circle cx="16.899999999999977" cy="47.80000000000001" r="3.7" fill="#e8921e"/><circle cx="16.899999999999977" cy="83.80000000000001" r="3.7" fill="#e8921e"/><path d="M16.899999999999977 115.80000000000001 L21.399999999999977 123.80000000000001 H12.399999999999977 Z" fill="#e8921e"/><circle cx="7.2000000000000455" cy="11.599999999999994" r="3.35" fill="#22a3cc" stroke="#f2f6f6" stroke-width="1.75"/><circle cx="7.2000000000000455" cy="119.6" r="3.7" fill="#22a3cc"/><circle cx="7.2000000000000455" cy="155.6" r="3.7" fill="#22a3cc"/><circle cx="7.2000000000000455" cy="191.60000000000002" r="3.7" fill="#22a3cc"/><circle cx="7.2000000000000455" cy="227.60000000000002" r="3.7" fill="#22a3cc"/><circle cx="7.2000000000000455" cy="263.6" r="3.7" fill="#22a3cc"/></svg>
<div class="a" style="left:23.5px;top:3.4000000000000057px;width:56.6px;height:17px;background:#22a3cc;border-radius:3.5px;border:2.2px solid #f2f6f6"></div>
<div class="t " style="left:32.60000000000002px;top:6.05px;color:#e6f5fb;">7.477</div>
<div class="t " style="left:83px;top:5.95px;color:#e2e2e2;">Merging docking code</div>
<div class="t " style="left:83px;top:22.05px;color:#8e8e8e;">nuno</div>
<div class="a" style="left:525.01px;top:20.25px;width:40.6px;height:12px;background:#262626"></div>
<div class="t " style="left:529.01px;top:20.25px;color:#9a9a9a;">17:48</div>
<div class="a" style="left:24.299999999999955px;top:39.65px;width:55.6px;height:16.4px;background:#c08c42;border-radius:3.5px"></div>
<div class="t " style="left:32.60000000000002px;top:42.05px;color:#857660;">7.476</div>
<div class="t " style="left:83px;top:41.95px;color:#6a7886;">Docking examples</div>
<div class="t " style="left:83px;top:58.05px;color:#8e8e8e;">nuno</div>
<div class="a" style="left:525.01px;top:56.25px;width:40.6px;height:12px;background:#1f3850"></div>
<div class="t " style="left:529.01px;top:56.25px;color:#9a9a9a;">17:47</div>
<div class="a" style="left:24.299999999999955px;top:75.65px;width:55.6px;height:16.4px;background:#e68e1c;border-radius:3.5px"></div>
<div class="t " style="left:32.60000000000002px;top:78.05px;color:#fdf1dc;">7.475</div>
<div class="t " style="left:83px;top:77.95px;color:#e2e2e2;">Docking code</div>
<div class="t " style="left:83px;top:94.05px;color:#8e8e8e;">nuno</div>
<div class="a" style="left:525.01px;top:92.25px;width:40.6px;height:12px;background:#262626"></div>
<div class="t " style="left:529.01px;top:92.25px;color:#9a9a9a;">17:47</div>
<div class="a" style="left:24.299999999999955px;top:111.65px;width:55.6px;height:16.4px;background:#22a3cc;border-radius:3.5px"></div>
<div class="t " style="left:32.60000000000002px;top:114.05px;color:#e6f5fb;">7.474</div>
<div class="t " style="left:83px;top:113.95px;color:#e2e2e2;">ColorPicker4(): Fixed ImGuiColorEditFlags_NoTooltip when ImGuiColorEditFlags_NoPicker is set.</div>
<div class="t " style="left:83px;top:130.05px;color:#8e8e8e;">nuno</div>
<div class="a" style="left:481.10199999999986px;top:128.25px;width:84.5px;height:12px;background:#262626"></div>
<div class="t " style="left:485.10199999999986px;top:128.25px;color:#9a9a9a;">10/28 22:50</div>
<div class="a" style="left:24.299999999999955px;top:147.65px;width:55.6px;height:16.4px;background:#22a3cc;border-radius:3.5px"></div>
<div class="t " style="left:32.60000000000002px;top:150.05px;color:#e6f5fb;">7.473</div>
<div class="t " style="left:83px;top:149.95px;color:#e2e2e2;">Settings: omit outputing Collapsed=0 in .ini file. Changelog + docs.</div>
<div class="t " style="left:83px;top:166.05px;color:#8e8e8e;">nuno</div>
<div class="a" style="left:481.10199999999986px;top:164.25px;width:84.5px;height:12px;background:#262626"></div>
<div class="t " style="left:485.10199999999986px;top:164.25px;color:#9a9a9a;">10/28 22:50</div>
<div class="a" style="left:24.299999999999955px;top:183.65px;width:55.6px;height:16.4px;background:#22a3cc;border-radius:3.5px"></div>
<div class="t " style="left:32.60000000000002px;top:186.05px;color:#e6f5fb;">7.472</div>
<div class="t " style="left:83px;top:185.95px;color:#e2e2e2;">BeginChild(): Internal name used by child windows now omits the hash.</div>
<div class="t " style="left:83px;top:202.05px;color:#8e8e8e;">nuno</div>
<div class="a" style="left:481.10199999999986px;top:200.25px;width:84.5px;height:12px;background:#262626"></div>
<div class="t " style="left:485.10199999999986px;top:200.25px;color:#9a9a9a;">10/28 22:50</div>
<div class="a" style="left:24.299999999999955px;top:219.65px;width:55.6px;height:16.4px;background:#22a3cc;border-radius:3.5px"></div>
<div class="t " style="left:32.60000000000002px;top:222.05px;color:#e6f5fb;">7.471</div>
<div class="t " style="left:83px;top:221.95px;color:#e2e2e2;">Windows: tidying up skipitems logic at end of Begin(), normally should be a no-op.</div>
<div class="t " style="left:83px;top:238.05px;color:#8e8e8e;">nuno</div>
<div class="a" style="left:481.10199999999986px;top:236.25px;width:84.5px;height:12px;background:#262626"></div>
<div class="t " style="left:485.10199999999986px;top:236.25px;color:#9a9a9a;">10/28 22:50</div>
<div class="a" style="left:24.299999999999955px;top:255.65px;width:55.6px;height:16.4px;background:#22a3cc;border-radius:3.5px"></div>
<div class="t " style="left:32.60000000000002px;top:258.05px;color:#e6f5fb;">7.470</div>
<div class="t " style="left:83px;top:257.95px;color:#e2e2e2;">Windows: fixed double-clicked border from showing highlighted at the start.</div>
<div class="t " style="left:83px;top:274.05px;color:#8e8e8e;">nuno</div>
<div class="a" style="left:481.10199999999986px;top:272.25px;width:84.5px;height:12px;background:#262626"></div>
<div class="t " style="left:485.10199999999986px;top:272.25px;color:#9a9a9a;">10/28 22:50</div>
</div>
<div class="a" style="left:1273px;top:93px;width:5px;height:274px;background:#1b1b1b"></div>
<div class="a" style="left:1274px;top:94.5px;width:4px;height:9.5px;background:#4e4e4e;border-radius:2px"></div>
<div class="a" style="left:701px;top:367px;width:577px;height:8px;background:#1b1b1b"></div>
<div class="a" style="left:701.8px;top:369px;width:290px;height:4.6px;background:#525252;border-radius:2.5px"></div>
<div class="a" style="left:701px;top:375px;width:577px;height:1px;background:#3c3c3c"></div>
<div class="a" style="left:701px;top:375px;width:577px;height:20px;background:#1c1c1d"></div>
<div class="a" style="left:701px;top:395px;width:577px;height:1px;background:#3c3c3c"></div>
<div class="a" style="left:704.2px;top:377px;width:154.3px;height:18px;background:#7c7c7d;border-radius:2.5px 2.5px 0 0"></div>
<div class="t " style="left:706.3000000000001px;top:380.10px;color:#dcdcdc;">Changelist Details</div>
<svg class="ic" style="left:1245.7px;top:379px" width="12" height="14" viewBox="0 0 12 14"><rect x="1" y="1.1" width="10" height="3" fill="#111"/><rect x="1" y="1.4" width="10" height="2.5" fill="#f0f0f0"/><path d="M0.6 5.8 H11.4 L6 13 Z" fill="#f0f0f0"/></svg>
<svg class="ic" style="left:1262px;top:380.4px" width="12" height="12" viewBox="0 0 12 12"><path d="M0.6 0.6 L11.1 11.1 M11.1 0.6 L0.6 11.1" stroke="#a0a0a0" stroke-width="1.2"/></svg>
<div class="a" style="left:701px;top:375px;width:577px;height:1px;background:#3c3c3c"></div>
<div class="t " style="left:705px;top:399.50px;color:#d8d8d8;">Id</div>
<div class="t " style="left:705px;top:415.60px;color:#d8d8d8;">User</div>
<div class="t " style="left:705px;top:431.60px;color:#d8d8d8;">State</div>
<div class="t " style="left:705px;top:447.50px;color:#d8d8d8;">Revision</div>
<div class="t " style="left:705px;top:466.30px;color:#d8d8d8;">Date</div>
<div class="t " style="left:705px;top:482.10px;color:#d8d8d8;">Comment</div>
<div class="t " style="left:798.8px;top:399.50px;color:#d8d8d8;">7.476</div>
<div class="t " style="left:798.8px;top:415.60px;color:#d8d8d8;">nuno</div>
<div class="t " style="left:798.8px;top:431.60px;color:#d8d8d8;">Committed</div>
<div class="t " style="left:798.8px;top:466.30px;color:#d8d8d8;">17:47</div>
<div class="t " style="left:1213.9740000000002px;top:399.50px;color:#d8d8d8;">docking</div>
<div class="a" style="left:798.5px;top:445.1px;width:52.6px;height:18.8px;background:#2b2b2b"></div>
<div class="a" style="left:851.1px;top:445.1px;width:19.2px;height:18.8px;background:#464646"></div>
<svg class="ic" style="left:855.4px;top:449.4px" width="11.2" height="9.4" viewBox="0 0 11.2 9.4"><path d="M0 0 H11.2 L5.6 9.4 Z" fill="#bdbdbd"/></svg>
<div class="t " style="left:800.5px;top:449.20px;color:#7a7a7a;">1/1</div>
<div class="a" style="left:798.5px;top:479.8px;width:466.5px;height:67.5px;background:#333333"></div>
<div class="t " style="left:800.9px;top:483.80px;color:#d8d8d8;">Docking examples</div>
<div class="a" style="left:1273px;top:396px;width:5px;height:284px;background:#1b1b1b"></div>
<div class="a" style="left:1274px;top:397px;width:4px;height:135.6px;background:#4a4a4a;border-radius:2px"></div>
<div class="a" style="left:703px;top:548.7px;width:568.8px;height:19.2px;background:#1f3850"></div>
<div class="t " style="left:705px;top:552.80px;color:#e4e4e4;">Assets</div>
<div class="clip" style="left:701px;top:568px;width:572px;height:110px">
<svg class="ic" style="left:4.2999999999999545px;top:1.40px" width="14" height="17" viewBox="0 0 14 17"><path d="M3.4 1.9 H8.2 L11.5 5.2 V13.5 Q11.5 15.1 9.9 15.1 H3.4 Q1.9 15.1 1.9 13.5 V3.5 Q1.9 1.9 3.4 1.9 Z" fill="none" stroke="#8fb3ca" stroke-width="1.75" stroke-linejoin="round"/><path d="M8.2 1.9 V5.2 H11.5 Z" fill="#8fb3ca" stroke="#8fb3ca" stroke-width="0.8" stroke-linejoin="round"/></svg>
<div class="t " style="left:23px;top:5.20px;color:#87a7ba;">docs/CHANGELOG.txt</div>
<svg class="ic" style="left:161.024px;top:1.70px" width="15" height="16" viewBox="0 0 15 16"><g fill="none" stroke="#8fb3ca" stroke-width="1.45"><circle cx="2.8" cy="3" r="1.9"/><circle cx="2.8" cy="13.4" r="1.9"/><line x1="2.8" y1="4.9" x2="2.8" y2="11.5"/><circle cx="13" cy="13.4" r="1.9"/><path d="M13 11.5 V6.2 Q13 3.2 10 3.2 H8.4"/></g><path d="M6.4 3.2 L9.4 0.4 V6 Z" fill="#8fb3ca"/></svg>
<svg class="ic" style="left:4.2999999999999545px;top:18.90px" width="14" height="17" viewBox="0 0 14 17"><path d="M3.4 1.9 H8.2 L11.5 5.2 V13.5 Q11.5 15.1 9.9 15.1 H3.4 Q1.9 15.1 1.9 13.5 V3.5 Q1.9 1.9 3.4 1.9 Z" fill="none" stroke="#8fb3ca" stroke-width="1.75" stroke-linejoin="round"/><path d="M8.2 1.9 V5.2 H11.5 Z" fill="#8fb3ca" stroke="#8fb3ca" stroke-width="0.8" stroke-linejoin="round"/></svg>
<div class="t " style="left:23px;top:22.70px;color:#87a7ba;">docs/README.md</div>
<svg class="ic" style="left:131.752px;top:19.20px" width="15" height="16" viewBox="0 0 15 16"><g fill="none" stroke="#8fb3ca" stroke-width="1.45"><circle cx="2.8" cy="3" r="1.9"/><circle cx="2.8" cy="13.4" r="1.9"/><line x1="2.8" y1="4.9" x2="2.8" y2="11.5"/><circle cx="13" cy="13.4" r="1.9"/><path d="M13 11.5 V6.2 Q13 3.2 10 3.2 H8.4"/></g><path d="M6.4 3.2 L9.4 0.4 V6 Z" fill="#8fb3ca"/></svg>
<svg class="ic" style="left:4.2999999999999545px;top:36.40px" width="14" height="17" viewBox="0 0 14 17"><path d="M3.4 1.9 H8.2 L11.5 5.2 V13.5 Q11.5 15.1 9.9 15.1 H3.4 Q1.9 15.1 1.9 13.5 V3.5 Q1.9 1.9 3.4 1.9 Z" fill="none" stroke="#8fb3ca" stroke-width="1.75" stroke-linejoin="round"/><path d="M8.2 1.9 V5.2 H11.5 Z" fill="#8fb3ca" stroke="#8fb3ca" stroke-width="0.8" stroke-linejoin="round"/></svg>
<div class="t " style="left:23px;top:40.20px;color:#87a7ba;">docs/TODO.txt</div>
<svg class="ic" style="left:124.434px;top:36.70px" width="15" height="16" viewBox="0 0 15 16"><g fill="none" stroke="#8fb3ca" stroke-width="1.45"><circle cx="2.8" cy="3" r="1.9"/><circle cx="2.8" cy="13.4" r="1.9"/><line x1="2.8" y1="4.9" x2="2.8" y2="11.5"/><circle cx="13" cy="13.4" r="1.9"/><path d="M13 11.5 V6.2 Q13 3.2 10 3.2 H8.4"/></g><path d="M6.4 3.2 L9.4 0.4 V6 Z" fill="#8fb3ca"/></svg>
<svg class="ic" style="left:4.2999999999999545px;top:53.90px" width="14" height="17" viewBox="0 0 14 17"><path d="M3.4 1.9 H8.2 L11.5 5.2 V13.5 Q11.5 15.1 9.9 15.1 H3.4 Q1.9 15.1 1.9 13.5 V3.5 Q1.9 1.9 3.4 1.9 Z" fill="none" stroke="#8fb3ca" stroke-width="1.75" stroke-linejoin="round"/><path d="M8.2 1.9 V5.2 H11.5 Z" fill="#8fb3ca" stroke="#8fb3ca" stroke-width="0.8" stroke-linejoin="round"/></svg>
<div class="t " style="left:23px;top:57.70px;color:#87a7ba;">examples/example_allegro5/main.cpp</div>
<svg class="ic" style="left:278.112px;top:54.20px" width="15" height="16" viewBox="0 0 15 16"><g fill="none" stroke="#8fb3ca" stroke-width="1.45"><circle cx="2.8" cy="3" r="1.9"/><circle cx="2.8" cy="13.4" r="1.9"/><line x1="2.8" y1="4.9" x2="2.8" y2="11.5"/><circle cx="13" cy="13.4" r="1.9"/><path d="M13 11.5 V6.2 Q13 3.2 10 3.2 H8.4"/></g><path d="M6.4 3.2 L9.4 0.4 V6 Z" fill="#8fb3ca"/></svg>
<svg class="ic" style="left:4.2999999999999545px;top:71.40px" width="14" height="17" viewBox="0 0 14 17"><path d="M3.4 1.9 H8.2 L11.5 5.2 V13.5 Q11.5 15.1 9.9 15.1 H3.4 Q1.9 15.1 1.9 13.5 V3.5 Q1.9 1.9 3.4 1.9 Z" fill="none" stroke="#8fb3ca" stroke-width="1.75" stroke-linejoin="round"/><path d="M8.2 1.9 V5.2 H11.5 Z" fill="#8fb3ca" stroke="#8fb3ca" stroke-width="0.8" stroke-linejoin="round"/></svg>
<div class="t " style="left:23px;top:75.20px;color:#87a7ba;">examples/example_apple_metal/example_apple_metal.xcodeproj/project.pbxproj</div>
<svg class="ic" style="left:4.2999999999999545px;top:88.90px" width="14" height="17" viewBox="0 0 14 17"><path d="M3.4 1.9 H8.2 L11.5 5.2 V13.5 Q11.5 15.1 9.9 15.1 H3.4 Q1.9 15.1 1.9 13.5 V3.5 Q1.9 1.9 3.4 1.9 Z" fill="none" stroke="#8fb3ca" stroke-width="1.75" stroke-linejoin="round"/><path d="M8.2 1.9 V5.2 H11.5 Z" fill="#8fb3ca" stroke="#8fb3ca" stroke-width="0.8" stroke-linejoin="round"/></svg>
<div class="t " style="left:23px;top:92.70px;color:#87a7ba;">examples/example_apple_metal/main.mm</div>
<svg class="ic" style="left:292.748px;top:89.20px" width="15" height="16" viewBox="0 0 15 16"><g fill="none" stroke="#8fb3ca" stroke-width="1.45"><circle cx="2.8" cy="3" r="1.9"/><circle cx="2.8" cy="13.4" r="1.9"/><line x1="2.8" y1="4.9" x2="2.8" y2="11.5"/><circle cx="13" cy="13.4" r="1.9"/><path d="M13 11.5 V6.2 Q13 3.2 10 3.2 H8.4"/></g><path d="M6.4 3.2 L9.4 0.4 V6 Z" fill="#8fb3ca"/></svg>
<svg class="ic" style="left:4.2999999999999545px;top:106.40px" width="14" height="17" viewBox="0 0 14 17"><path d="M3.4 1.9 H8.2 L11.5 5.2 V13.5 Q11.5 15.1 9.9 15.1 H3.4 Q1.9 15.1 1.9 13.5 V3.5 Q1.9 1.9 3.4 1.9 Z" fill="none" stroke="#8fb3ca" stroke-width="1.75" stroke-linejoin="round"/><path d="M8.2 1.9 V5.2 H11.5 Z" fill="#8fb3ca" stroke="#8fb3ca" stroke-width="0.8" stroke-linejoin="round"/></svg>
<div class="t " style="left:23px;top:110.20px;color:#87a7ba;">examples/example_apple_opengl2/main.mm</div>
<svg class="ic" style="left:307.384px;top:106.70px" width="15" height="16" viewBox="0 0 15 16"><g fill="none" stroke="#8fb3ca" stroke-width="1.45"><circle cx="2.8" cy="3" r="1.9"/><circle cx="2.8" cy="13.4" r="1.9"/><line x1="2.8" y1="4.9" x2="2.8" y2="11.5"/><circle cx="13" cy="13.4" r="1.9"/><path d="M13 11.5 V6.2 Q13 3.2 10 3.2 H8.4"/></g><path d="M6.4 3.2 L9.4 0.4 V6 Z" fill="#8fb3ca"/></svg>
</div>
<div class="a" style="left:2px;top:680px;width:1276px;height:1px;background:#3a3a3a"></div>
<div class="a" style="left:2px;top:681px;width:1276px;height:18px;background:#262626"></div>
<div class="a" style="left:1137.1px;top:682px;width:18.7px;height:16.9px;background:#3a3a3a"></div>
<svg class="ic" style="left:1138.6px;top:683.6px" width="16" height="12" viewBox="0 0 16 12"><rect x="1.3" y="1.2" width="13.2" height="9.6" rx="2" fill="none" stroke="#ababab" stroke-width="1.3"/><path d="M1.8 2.2 L6.6 6.3 Q7.9 7.4 9.2 6.3 L14 2.2" fill="none" stroke="#ababab" stroke-width="1.3"/></svg>
<div class="t " style="left:1177.066px;top:685.20px;color:#e0e0e0;">Authenticated</div>
<div class="a" style="left:0;top:13px;width:1.3px;height:689px;background:#4e4e4e"></div>
<div class="a" style="left:1278px;top:13px;width:2px;height:689px;background:#4a4a4a"></div>
<div class="a" style="left:0;top:699.3px;width:1280px;height:1.4px;background:#4e4e4e"></div>
<div class="a" style="left:0;top:700.5px;width:1280px;height:1.5px;background:#111"></div>
</body></html>
